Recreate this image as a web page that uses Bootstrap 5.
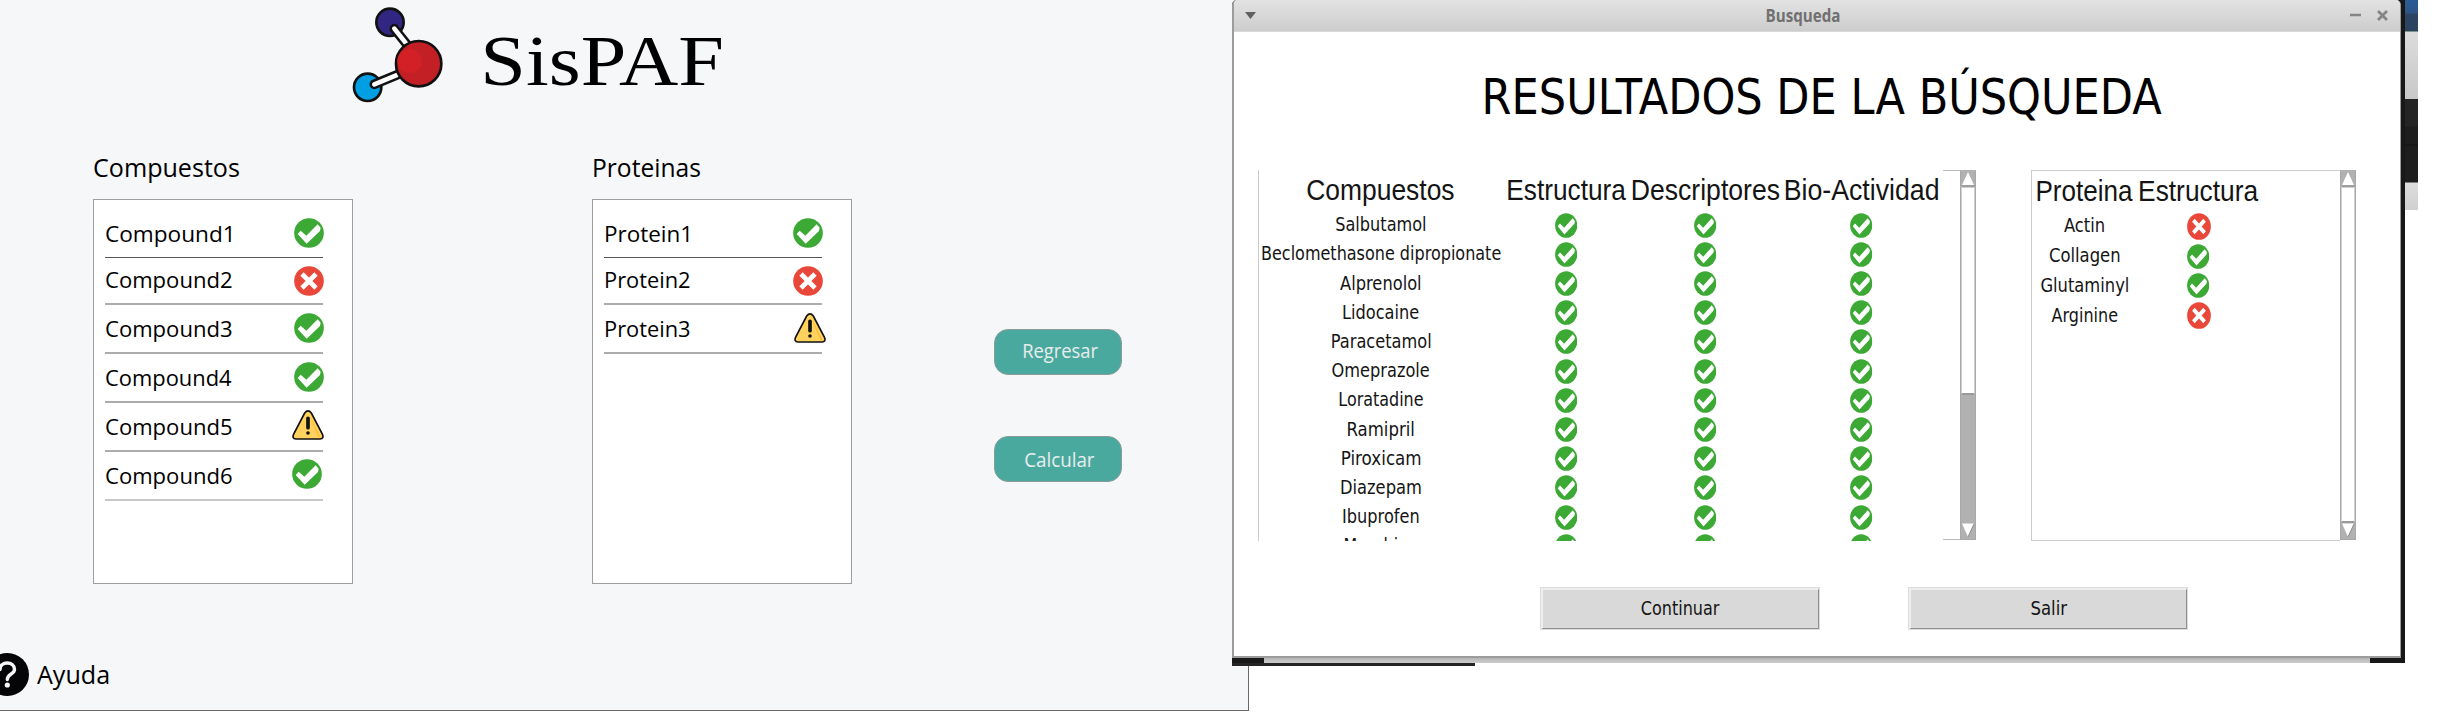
<!DOCTYPE html>
<html lang="es">
<head>
<meta charset="utf-8">
<meta name="viewport" content="width=device-width, initial-scale=1">
<title>SisPAF</title>
<link href="https://cdn.jsdelivr.net/npm/bootstrap@5.3.0/dist/css/bootstrap.min.css" rel="stylesheet">
<style>
  body { background: #fff; color: #000; font-family: "Open Sans", sans-serif; overflow: hidden; height: 716px; }
  svg { display: block; flex: none; }
  [data-w] { display: inline-block; white-space: nowrap; }

  /* main application */
  .app { width: 1249px; height: 711px; background: #f5f7f9; border-right: 1px solid #6b6868; border-bottom: 1px solid #6b6868; overflow: hidden; }
  .app-head { height: 146px; padding-left: 350px; }
  .brand { font: 71px/100px "Liberation Serif", serif; margin: 11px 0 0 35px; }
  .panels { height: 438px; padding-left: 93px; }
  .panel { width: 260px; }
  .panel + .panel { margin-left: 239px; }
  .panel h2 { font-size: 25px; line-height: 42px; height: 53px; margin: 0; font-weight: 400; padding-left: 1px; }
  .panel + .panel h2, .panel + .panel .entry { padding-left: 2px; }
  .entries { height: 385px; border: 1px solid #9c9ea0; border-radius: 0; background: #fff; padding-left: 11px; }
  .entry { width: 218px; height: 49px; border-bottom: 2px solid #acacac; padding: 0 0 9px 1px; font-size: 22px; line-height: 30px; }
  .entry:first-child { height: 58px; border-bottom: 1px solid #555; }
  .entry:nth-child(2) { height: 47px; }
  .entry:nth-child(6) { border-color: #c8c8c8; }
  .entry svg { width: 30px; height: 30px; margin-right: -1px; }
  .entry svg.tri { width: 32px; height: 30px; }
  .low { margin-bottom: -2px; }
  .raised { margin-bottom: 1px; }
  .entry svg.shifted { margin-right: 1px; }
  .entry svg.outer { margin-right: -4px; }
  .actions { margin-left: 142px; padding-top: 183px; gap: 61px; }
  .btn-app { width: 128px; height: 46px; border-radius: 14px; border: 1px solid #8b9b98; background: #4aa99e; color: #e8eded; font-size: 19.4px; line-height: 30px; padding: 0 0 3px 5px; }
  .btn-app:last-child { padding: 1px 0 0 2px; }
  .app-foot { margin-top: 68px; height: 44px; font-size: 25.5px; margin-left: -14px; gap: 8px; }

  /* results window over the application */
  .shot { left: 1232px; top: 0; }
  .win-frame { width: 1173px; height: 658px; background: #181818; border-top-left-radius: 5px; }
  .win { width: 1169px; height: 658px; background: #fff; border: solid #9c9c9c; border-width: 0 1px 2px 2px; border-radius: 5px 5px 0 0; overflow: hidden; }
  .win-bar { height: 32px; background: linear-gradient(#e2e2e2, #cdcdcd); color: #707070; padding: 0 12px 0 11px; font-size: 17px; font-weight: 700; border-bottom: 1px solid #d8d8d8; }
  .win h1 { font: 49px/130px "DejaVu Sans", sans-serif; margin: 0; padding: 1px 0 0 9px; height: 130px; overflow: hidden; }
  .results { margin: 8px 0 0 24px; height: 371px; font: 18.7px/1 "DejaVu Sans", sans-serif; color: #141414; }
  .grid-a, .grid-b { display: grid; justify-items: center; align-items: center; align-content: start; height: 371px; overflow: hidden; }
  .grid-a { width: 685px; border-left: 1px solid #ccc; grid-template-columns: 242px 130px 149px 163px; grid-template-rows: 40.6px; grid-auto-rows: 29.2px; }
  .grid-b { width: 309px; margin-left: 55px; border: 1px solid #ccc; border-right: 0; grid-template-columns: 104px 125px; grid-template-rows: 40.6px; grid-auto-rows: 29.7px; }
  .th-cell { font: 29px/36px "Liberation Sans", sans-serif; }
  .name { display: flex; justify-content: center; width: 0; line-height: 27px; }
  .name:not(.th-cell) { margin-left: 2px; margin-top: -1px; }
  .results .ok { width: 22.4px; height: 25px; }
  .results .no { width: 24px; height: 27px; }
  .ok .tick { stroke: #fff; stroke-width: 4; stroke-linejoin: round; }
  .lead-out { width: 17px; border: solid #bbb; border-width: 1px 0; margin-bottom: 1px; }
  .scroll { width: 16px; height: 370px; background: #b1b1b1; border: solid #a8a8a8; border-width: 0 1px 1px; }
  .scroll .thumb { background: #fff; border: 1px solid #d0d0d0; border-bottom: 2px solid #999; width: 14px; }
  .scroll.half .thumb { height: 208px; margin-bottom: 128px; }
  .scroll.full .thumb { height: 336px; }
  .win-actions { margin: 46px 0 0 306px; gap: 88px; font-family: "DejaVu Sans", sans-serif; }
  .btn-tk { width: 280px; height: 43px; border-radius: 0; background: #d9d9d9; border: solid; border-width: 3px 2px 2px 3px; border-color: #eee #8f8f8f #8f8f8f #eee; outline: 1px solid #dcdcdc; outline-offset: -1px; color: #141414; font-size: 18.8px; line-height: 30px; padding: 0; }
  .under { width: 1173px; height: 5px; background: #181818; padding: 0 35px 0 32px; }
  .under div { height: 5px; background: linear-gradient(#b5b5b5, #cccccc); }
  .under-dark { width: 243px; height: 3px; background: #262324; }
  .behind { width: 13px; height: 210px; background: linear-gradient(#2b5c98 0, #2d5586 13px, #2b4566 14px, #2b425f 30px, #24484c 31px, #dcdcdc 32px, #c8c8c8 99px, #242424 99px, #242424 126px, #1d1d1d 127px, #1d1d1d 144px, #131313 145px, #1d1d1d 146px, #1d1d1d 182px, #ddd 183px, #d0d0d0 210px); }
</style>
</head>
<body class="position-relative">
<svg width="0" height="0" class="position-absolute" aria-hidden="true">
  <symbol id="ok" viewBox="0 0 90 90" preserveAspectRatio="none"><circle cx="45" cy="45" r="44.5" fill="#3ca935"/><path class="tick" fill="#fff" d="M11 48 20 38 37 53 71 19 80 29 78 39 38 77Z"/></symbol>
  <symbol id="no" viewBox="0 0 90 90" preserveAspectRatio="none"><circle cx="45" cy="45" r="44.5" fill="#e94739"/><path d="M24 24 66 66M66 24 24 66" stroke="#fff" stroke-width="14" fill="none"/></symbol>
  <symbol id="warn" viewBox="0 0 96 90"><path d="M38 9Q48-4 58 9L91 72Q97 86 84 87L12 87Q-1 86 5 72Z" fill="#ffd25e" stroke="#111" stroke-width="5"/><path d="M85 82 52 14Q62 40 80 80Z" fill="#fdb52e"/><path d="M48 25V53" stroke="#111" stroke-width="11" stroke-linecap="round"/><circle cx="48" cy="69" r="5.5" fill="#111"/></symbol>
</svg>

<main class="app d-flex flex-column">
  <header class="app-head d-flex align-items-start">
    <svg width="100" height="106" viewBox="60 0 300 318" stroke="#111" stroke-width="8">
      <circle cx="180" cy="67" r="41" fill="#312783"/>
      <circle cx="113" cy="262" r="41" fill="#009fe3"/>
      <g stroke-linecap="round"><path d="M193 86 240 145M133 253 220 217" stroke-width="29"/><path d="M193 86 240 145M133 253 220 217" stroke="#fff" stroke-width="14"/></g>
      <circle cx="266" cy="191" r="68" fill="#c32026"/>
      <circle cx="238" cy="183" r="36" fill="#d32027" stroke="none"/>
    </svg>
    <div class="brand"><span data-w="236" data-side="left">SisPAF</span></div>
  </header>
  <div class="panels d-flex align-items-start">
    <section class="panel">
      <h2><span data-w="145" data-side="left">Compuestos</span></h2>
      <div class="entries">
        <div class="entry d-flex justify-content-between align-items-end"><span data-w="125" data-side="left">Compound1</span><svg><use href="#ok"/></svg></div>
        <div class="entry d-flex justify-content-between align-items-end"><span data-w="126" data-side="left">Compound2</span><svg class="low"><use href="#no"/></svg></div>
        <div class="entry d-flex justify-content-between align-items-end"><span data-w="126" data-side="left">Compound3</span><svg><use href="#ok"/></svg></div>
        <div class="entry d-flex justify-content-between align-items-end"><span data-w="126" data-side="left">Compound4</span><svg><use href="#ok"/></svg></div>
        <div class="entry d-flex justify-content-between align-items-end"><span data-w="126" data-side="left">Compound5</span><svg class="tri raised"><use href="#warn"/></svg></div>
        <div class="entry d-flex justify-content-between align-items-end"><span data-w="126" data-side="left">Compound6</span><svg class="raised shifted"><use href="#ok"/></svg></div>
      </div>
    </section>
    <section class="panel">
      <h2><span data-w="106" data-side="left">Proteinas</span></h2>
      <div class="entries">
        <div class="entry d-flex justify-content-between align-items-end"><span data-w="82.5" data-side="left">Protein1</span><svg><use href="#ok"/></svg></div>
        <div class="entry d-flex justify-content-between align-items-end"><span data-w="84" data-side="left">Protein2</span><svg class="low"><use href="#no"/></svg></div>
        <div class="entry d-flex justify-content-between align-items-end"><span data-w="84" data-side="left">Protein3</span><svg class="tri outer"><use href="#warn"/></svg></div>
      </div>
    </section>
    <div class="actions d-flex flex-column">
      <button class="btn btn-app"><span data-w="75">Regresar</span></button>
      <button class="btn btn-app"><span data-w="69.5">Calcular</span></button>
    </div>
  </div>
  <footer class="app-foot d-flex align-items-center">
    <svg width="43" height="43" viewBox="0 0 43 43"><circle cx="21.500" cy="21.500" r="21.500" fill="#050507"/><path d="M14 16.500C14 7.500 28.500 8 28.500 16.500C28.500 21.500 21.300 20.500 21.300 26.500" fill="none" stroke="#f5f7f9" stroke-width="3.400" stroke-linecap="round"/><circle cx="21.300" cy="32" r="2.600" fill="#f5f7f9"/></svg>
    <span data-w="72" data-side="left">Ayuda</span>
  </footer>
</main>

<div class="shot position-absolute d-flex align-items-start">
  <div>
    <div class="win-frame">
      <div class="win">
        <div class="win-bar d-flex justify-content-between align-items-center">
          <svg width="11" height="7" viewBox="0 0 11 7"><path d="M0 0H11L5.500 7Z" fill="#606060"/></svg>
          <span data-w="73">Busqueda</span>
          <svg width="38" height="11" viewBox="0 0 38 11" stroke="#858585" fill="none"><path d="M0 5H11" stroke-width="2.400"/><path d="M28 1 37 10M37 1 28 10" stroke-width="2.800"/></svg>
        </div>
        <h1 class="d-flex justify-content-center"><span data-w="677">RESULTADOS DE LA BÚSQUEDA</span></h1>
        <div class="results d-flex align-items-start">
          <div class="grid-a" id="compounds"></div>
          <div class="lead-out align-self-stretch"></div>
          <div class="scroll half d-flex flex-column">
            <svg width="14" height="17" viewBox="0 0 14 17"><path d="M7 2 13 15H1Z" fill="#fff"/><path d="M1 16H14" stroke="#8c8c8c"/></svg>
            <div class="thumb"></div>
            <svg width="14" height="16" viewBox="0 0 14 16"><path d="M1 0.500H13L7 14Z" fill="#fff"/><path d="M13 1 7 14" stroke="#8c8c8c"/></svg>
          </div>
          <div class="grid-b" id="proteins"></div>
          <div class="scroll full d-flex flex-column">
            <svg width="14" height="17" viewBox="0 0 14 17"><path d="M7 2 13 15H1Z" fill="#fff"/><path d="M1 16H14" stroke="#8c8c8c"/></svg>
            <div class="thumb"></div>
            <svg width="14" height="16" viewBox="0 0 14 16"><path d="M1 0.500H13L7 14Z" fill="#fff"/><path d="M13 1 7 14" stroke="#8c8c8c"/></svg>
          </div>
        </div>
        <div class="win-actions d-flex">
          <button class="btn btn-tk"><span data-w="78">Continuar</span></button>
          <button class="btn btn-tk"><span data-w="36">Salir</span></button>
        </div>
      </div>
    </div>
    <div class="under"><div></div></div>
    <div class="under-dark"></div>
  </div>
  <div class="behind"></div>
</div>

<script src="https://cdn.jsdelivr.net/npm/bootstrap@5.3.0/dist/js/bootstrap.bundle.min.js"></script>
<script>
  // Rows: name, drawn width of the name, state of each column
  const fill = (id, heads, rows) => {
    const cell = s => `<svg class="${s}"><use href="#${s}"/></svg>`;
    document.getElementById(id).innerHTML =
      heads.map(([t, w]) => `<div class="name th-cell"><span data-w="${w}">${t}</span></div>`).join('') +
      rows.map(([t, w, ...st]) => `<div class="name"><span data-w="${w}">${t}</span></div>` + st.map(cell).join('')).join('');
  };
  fill('compounds', [['Compuestos', 147], ['Estructura', 118.5], ['Descriptores', 147], ['Bio-Actividad', 153]],
    [['Salbutamol', 89.5], ['Beclomethasone dipropionate', 239], ['Alprenolol', 80.5], ['Lidocaine', 76], ['Paracetamol', 99],
     ['Omeprazole', 97], ['Loratadine', 84], ['Ramipril', 66.5], ['Piroxicam', 79], ['Diazepam', 80], ['Ibuprofen', 76], ['Morphine', 73]]
      .map(r => [...r, 'ok', 'ok', 'ok']));
  fill('proteins', [['Proteina', 96], ['Estructura', 119]],
    [['Actin', 40.5, 'no'], ['Collagen', 70, 'ok'], ['Glutaminyl', 87, 'ok'], ['Arginine', 66, 'no']]);

  const ctx = document.createElement('canvas').getContext('2d');
  document.querySelectorAll('[data-w]').forEach(el => {
    const cs = getComputedStyle(el);
    ctx.font = `${cs.fontWeight} ${cs.fontSize} ${cs.fontFamily}`;
    const m = ctx.measureText(el.textContent);
    const k = el.dataset.w / (m.actualBoundingBoxRight + m.actualBoundingBoxLeft);
    if (el.dataset.side === 'left') {
      el.style.transformOrigin = 'left';
      el.style.transform = `translateX(${m.actualBoundingBoxLeft * k}px) scaleX(${k})`;
    } else el.style.transform = `scaleX(${k})`;
  });
</script>
</body>
</html>
